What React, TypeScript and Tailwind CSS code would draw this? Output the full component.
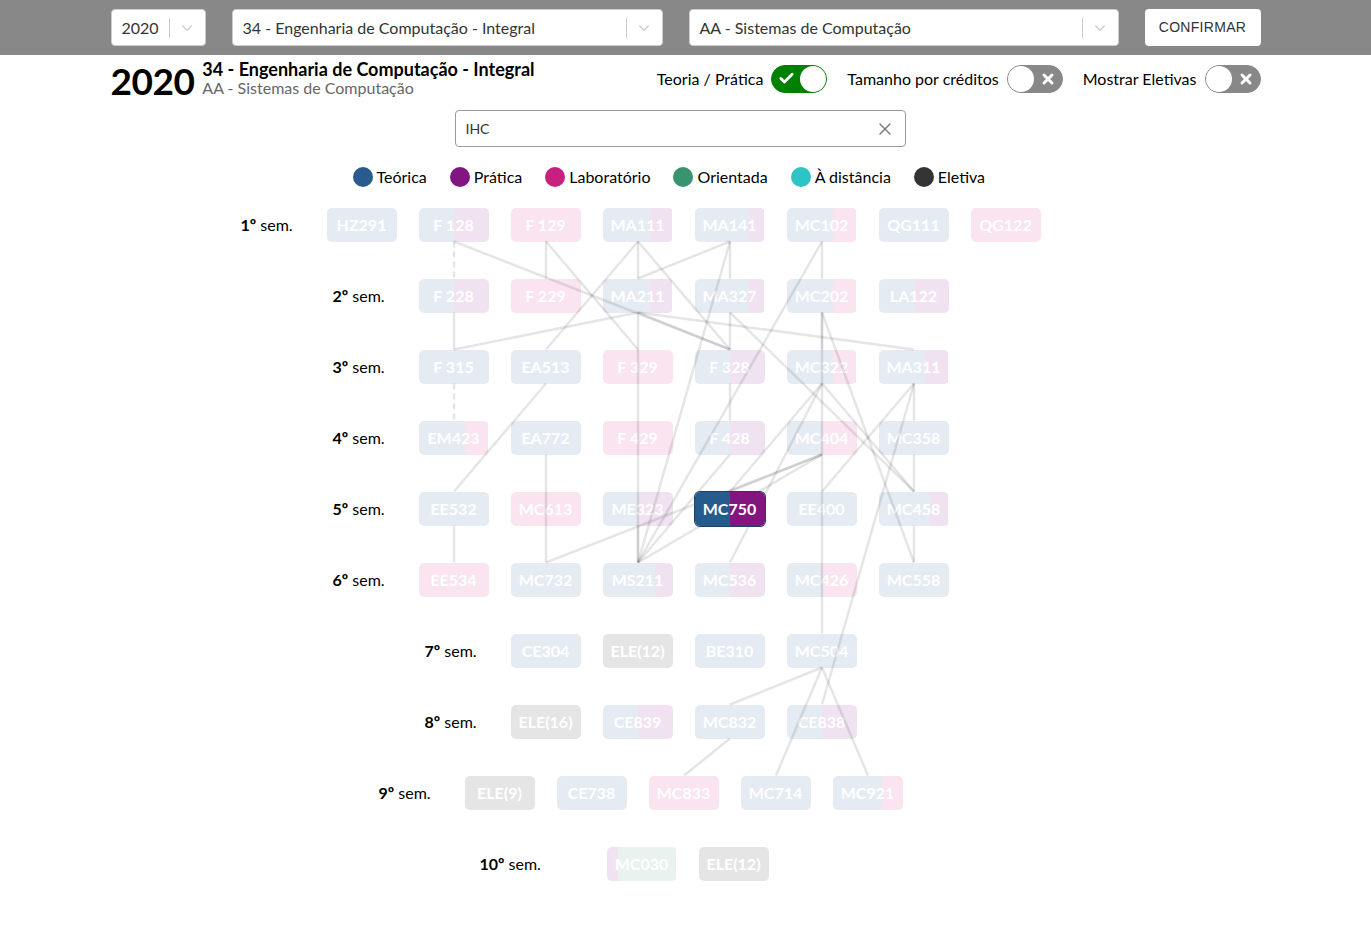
import { Check, ChevronDown, X } from 'lucide-react';

type Seg = [string, number];
type Node = { code: string; segs: Seg[]; active?: boolean };
type Row = { label: string; pad: string; lw: string; nodes: Node[] };

const T = 'bg-[#e5ebf2]';
const P = 'bg-[#f0e2f0]';
const L = 'bg-[#f9e4f0]';
const O = 'bg-[#e9f2ee]';
const E = 'bg-[#e5e5e5]';

const n = (code: string, ...segs: Seg[]): Node => ({ code, segs });

const rows: Row[] = [
  {
    label: '1º',
    pad: 'pl-[130px]',
    lw: 'w-[86px]',
    nodes: [
      n('HZ291', [T, 100]),
      n('F 128', [T, 50], [P, 50]),
      n('F 129', [L, 100]),
      n('MA111', [T, 67], [P, 33]),
      n('MA141', [T, 76], [P, 24]),
      n('MC102', [T, 66], [L, 34]),
      n('QG111', [T, 100]),
      n('QG122', [L, 100]),
    ],
  },
  {
    label: '2º',
    pad: 'pl-[222px]',
    lw: 'w-[86px]',
    nodes: [
      n('F 228', [T, 50], [P, 50]),
      n('F 229', [L, 100]),
      n('MA211', [T, 67], [P, 33]),
      n('MA327', [T, 76], [P, 24]),
      n('MC202', [T, 66], [L, 34]),
      n('LA122', [T, 50], [P, 50]),
    ],
  },
  {
    label: '3º',
    pad: 'pl-[222px]',
    lw: 'w-[86px]',
    nodes: [
      n('F 315', [T, 100]),
      n('EA513', [T, 100]),
      n('F 329', [L, 100]),
      n('F 328', [T, 50], [P, 50]),
      n('MC322', [T, 66], [L, 34]),
      n('MA311', [T, 66], [P, 34]),
    ],
  },
  {
    label: '4º',
    pad: 'pl-[222px]',
    lw: 'w-[86px]',
    nodes: [
      n('EM423', [T, 66], [L, 34]),
      n('EA772', [T, 100]),
      n('F 429', [L, 100]),
      n('F 428', [T, 50], [P, 50]),
      n('MC404', [T, 50], [L, 50]),
      n('MC358', [T, 100]),
    ],
  },
  {
    label: '5º',
    pad: 'pl-[222px]',
    lw: 'w-[86px]',
    nodes: [
      n('EE532', [T, 100]),
      n('MC613', [L, 100]),
      n('ME323', [T, 50], [P, 50]),
      { code: 'MC750', segs: [['bg-[#265b8e]', 50], ['bg-[#82157f]', 50]], active: true },
      n('EE400', [T, 100]),
      n('MC458', [T, 74], [P, 26]),
    ],
  },
  {
    label: '6º',
    pad: 'pl-[222px]',
    lw: 'w-[86px]',
    nodes: [
      n('EE534', [L, 100]),
      n('MC732', [T, 100]),
      n('MS211', [T, 75], [P, 25]),
      n('MC536', [T, 50], [P, 50]),
      n('MC426', [T, 50], [L, 50]),
      n('MC558', [T, 100]),
    ],
  },
  {
    label: '7º',
    pad: 'pl-[314px]',
    lw: 'w-[86px]',
    nodes: [n('CE304', [T, 100]), n('ELE(12)', [E, 100]), n('BE310', [T, 100]), n('MC504', [T, 100])],
  },
  {
    label: '8º',
    pad: 'pl-[314px]',
    lw: 'w-[86px]',
    nodes: [
      n('ELE(16)', [E, 100]),
      n('CE839', [T, 50], [P, 50]),
      n('MC832', [T, 100]),
      n('CE838', [T, 50], [P, 50]),
    ],
  },
  {
    label: '9º',
    pad: 'pl-[268px]',
    lw: 'w-[86px]',
    nodes: [
      n('ELE(9)', [E, 100]),
      n('CE738', [T, 100]),
      n('MC833', [L, 100]),
      n('MC714', [T, 100]),
      n('MC921', [T, 70], [L, 30]),
    ],
  },
  {
    label: '10º',
    pad: 'pl-[369px]',
    lw: 'w-[127px]',
    nodes: [n('MC030', [P, 17], [O, 83]), n('ELE(12)', [E, 100])],
  },
];

// prerequisite edges, from -> to (dashed = co-requisite)
const edges: [string, string, boolean?][] = [
  ['F 128', 'F 228', true],
  ['F 128', 'F 328'],
  ['F 129', 'F 229'],
  ['F 129', 'F 329'],
  ['MA111', 'MA211'],
  ['MA111', 'EA513'],
  ['MA111', 'F 328'],
  ['MA141', 'MA211'],
  ['MA141', 'MA327'],
  ['MA141', 'MS211'],
  ['MC102', 'MC202'],
  ['MC102', 'MS211'],
  ['F 228', 'F 315'],
  ['MA211', 'F 315'],
  ['MA211', 'F 328'],
  ['MA211', 'MA311'],
  ['MA211', 'MS211'],
  ['MA327', 'F 328'],
  ['MA327', 'MC458'],
  ['MC202', 'MC322'],
  ['MC202', 'MC558'],
  ['MC202', 'MC504'],
  ['F 315', 'EM423', true],
  ['EA513', 'EE532'],
  ['F 328', 'F 428'],
  ['MC322', 'MC750'],
  ['MC322', 'MC536'],
  ['MC322', 'MC458'],
  ['MA311', 'EE400'],
  ['MA311', 'CE838'],
  ['MA311', 'MC358'],
  ['MC358', 'MC458'],
  ['MC404', 'MC750'],
  ['MC404', 'MS211'],
  ['MC404', 'MC732'],
  ['F 428', 'MS211'],
  ['EA772', 'MC732'],
  ['EE532', 'EE534'],
  ['ME323', 'MS211'],
  ['MC458', 'MC558'],
  ['MC504', 'MC832'],
  ['MC504', 'MC714'],
  ['MC504', 'MC921'],
  ['MC832', 'MC833'],
];

const ROW_H = 71;
const NODE_W = 70;
const NODE_H = 34;
const PITCH = 92;
const padPx: Record<string, number> = {
  'pl-[130px]': 130,
  'pl-[222px]': 222,
  'pl-[314px]': 314,
  'pl-[268px]': 268,
  'pl-[369px]': 369,
};

const pos: Record<string, { x: number; top: number; bottom: number }> = {};
rows.forEach((r, ri) => {
  const lw = r.lw === 'w-[127px]' ? 127 : 86;
  r.nodes.forEach((nd, i) => {
    if (pos[nd.code]) return;
    const x = padPx[r.pad] + lw + i * PITCH + NODE_W / 2;
    const top = ri * ROW_H + (ROW_H - NODE_H) / 2;
    pos[nd.code] = { x, top, bottom: top + NODE_H };
  });
});

function Select({ w, text }: { w: string; text: string }) {
  return (
    <div className={`${w} h-[37px] bg-white rounded border border-[#cccccc] flex items-center`}>
      <span className="flex-1 pl-[10px] text-[16px] text-[#333] truncate">{text}</span>
      <span className="w-px h-[20px] bg-[#cccccc]" />
      <span className="w-[35px] flex justify-center">
        <ChevronDown className="w-[18px] h-[18px] text-[#cccccc]" strokeWidth={1.5} />
      </span>
    </div>
  );
}

function Toggle({ on }: { on: boolean }) {
  if (on) {
    return (
      <div className="w-[56px] h-[28px] rounded-full bg-[#008000] border border-[#008000] flex items-center justify-between pl-[6px] pr-0">
        <Check className="w-[17px] h-[17px] text-white" strokeWidth={4} />
        <span className="w-[26px] h-[26px] rounded-full bg-white" />
      </div>
    );
  }
  return (
    <div className="w-[56px] h-[28px] rounded-full bg-[#888888] border border-[#888888] flex items-center justify-between pr-[6px]">
      <span className="w-[26px] h-[26px] rounded-full bg-white" />
      <X className="w-[16px] h-[16px] text-white" strokeWidth={4.5} />
    </div>
  );
}

const legend: [string, string][] = [
  ['bg-[#2a5b8f]', 'Teórica'],
  ['bg-[#821581]', 'Prática'],
  ['bg-[#c9207f]', 'Laboratório'],
  ['bg-[#3a9370]', 'Orientada'],
  ['bg-[#2ec4c6]', 'À distância'],
  ['bg-[#333333]', 'Eletiva'],
];

export default function App() {
  return (
    <div className="min-h-screen bg-white text-black" style={{ fontFamily: 'Lato, "Noto Sans", sans-serif' }}>
      {/* Top bar */}
      <header className="h-[55px] bg-[#888888]">
        <div className="max-w-[1150px] mx-auto h-full flex items-center gap-[26px]">
          <Select w="w-[95px]" text="2020" />
          <Select w="w-[431px]" text="34 - Engenharia de Computação - Integral" />
          <Select w="w-[430px]" text="AA - Sistemas de Computação" />
          <button
            type="button"
            className="w-[116px] h-[37px] bg-white rounded text-[14px] text-[#333] tracking-[0.3px]"
            style={{ fontFamily: '"Liberation Sans", Arial, sans-serif' }}
          >
            CONFIRMAR
          </button>
        </div>
      </header>

      <main className="max-w-[1150px] mx-auto">
        {/* Title + toggles */}
        <div className="flex items-center justify-between h-[48px]">
          <div className="flex items-center gap-[8px]">
            <span className="text-[37px] font-bold leading-none pt-[3px] tracking-[-0.5px]">2020</span>
            <div className="flex flex-col -mt-[2px]">
              <span className="text-[18px] font-bold leading-[20px]">34 - Engenharia de Computação - Integral</span>
              <span className="text-[16px] text-[#666] leading-[18px]">AA - Sistemas de Computação</span>
            </div>
          </div>
          <div className="flex items-center text-[16px] -mt-[1px]">
            <span className="mr-[8px]">Teoria / Prática</span>
            <Toggle on />
            <span className="ml-[20px] mr-[8px]">Tamanho por créditos</span>
            <Toggle on={false} />
            <span className="ml-[20px] mr-[8px]">Mostrar Eletivas</span>
            <Toggle on={false} />
          </div>
        </div>

        {/* Search */}
        <div className="mt-[7px] ml-[344px] w-[451px] h-[37px] border border-[#999] rounded flex items-center pl-[10px] pr-[10px]">
          <span className="flex-1 text-[14px] text-[#333]">IHC</span>
          <X className="w-[20px] h-[20px] text-[#777]" strokeWidth={1.6} />
        </div>

        {/* Legend */}
        <div className="ml-[242px] mt-[18px] h-[24px] flex items-center gap-[23px] text-[16px]">
          {legend.map(([c, t]) => (
            <div key={t} className="flex items-center gap-[4px]">
              <span className={`w-[20px] h-[20px] rounded-full ${c}`} />
              <span>{t}</span>
            </div>
          ))}
        </div>

        {/* Curriculum graph */}
        <div className="relative">
          {rows.map((r) => (
            <div key={r.label} className={`h-[71px] flex items-center ${r.pad}`}>
              <div className={`${r.lw} text-[16px] shrink-0`}>
                <b>{r.label}</b> sem.
              </div>
              <div className="flex gap-[22px]">
                {r.nodes.map((nd, i) => (
                  <div
                    key={nd.code + i}
                    className={`relative w-[70px] h-[34px] rounded-[5px] overflow-hidden flex ${nd.active ? 'z-10 ring-1 ring-[#1d3f66]' : ''}`}
                  >
                    {nd.segs.map(([c, w], j) => (
                      <div key={j} className={`h-full ${c}`} style={{ width: `${w}%` }} />
                    ))}
                    <span className="absolute inset-0 flex items-center justify-center text-white font-bold text-[16px]">
                      {nd.code}
                    </span>
                  </div>
                ))}
              </div>
            </div>
          ))}

          <svg className="absolute left-0 top-0 pointer-events-none" width={1150} height={710}>
            {edges.map(([a, b, dashed], i) => {
              const p = pos[a];
              const q = pos[b];
              if (!p || !q) return null;
              return (
                <line
                  key={i}
                  x1={p.x}
                  y1={p.bottom}
                  x2={q.x}
                  y2={q.top}
                  stroke="rgba(0,0,0,0.1)"
                  strokeWidth={2.5}
                  strokeDasharray={dashed ? '6 4' : undefined}
                />
              );
            })}
          </svg>
        </div>
      </main>
    </div>
  );
}
